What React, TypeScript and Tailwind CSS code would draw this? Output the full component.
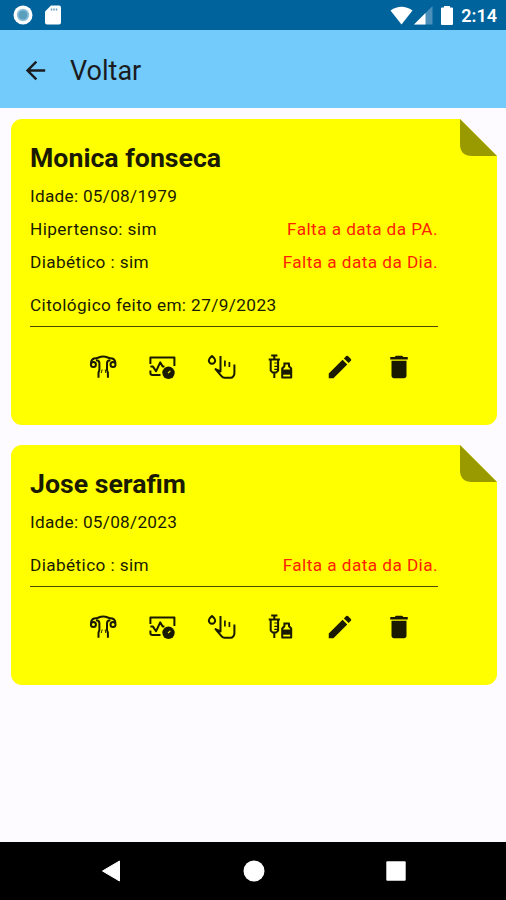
import React from 'react';
import { MdArrowBack, MdDelete, MdEdit } from 'react-icons/md';

interface Patient {
  name: string;
  birth: string;
  rows: { label: string; warning?: string; spaced?: boolean }[];
}

const patients: Patient[] = [
  {
    name: 'Monica fonseca',
    birth: '05/08/1979',
    rows: [
      { label: 'Hipertenso: sim', warning: 'Falta a data da PA.' },
      { label: 'Diabético : sim', warning: 'Falta a data da Dia.' },
      { label: 'Citológico feito em: 27/9/2023', spaced: true },
    ],
  },
  {
    name: 'Jose serafim',
    birth: '05/08/2023',
    rows: [{ label: 'Diabético : sim', warning: 'Falta a data da Dia.', spaced: true }],
  },
];

function ActionIcon({ children }: { children: React.ReactNode }) {
  return (
    <svg
      viewBox="0 0 30 30"
      className="h-[30px] w-[30px]"
      fill="none"
      stroke="currentColor"
      strokeWidth="2"
      strokeLinejoin="round"
    >
      {children}
    </svg>
  );
}

function UterusIcon() {
  return (
    <ActionIcon>
      <circle cx="5.4" cy="12.6" r="2.5" />
      <circle cx="25" cy="12.6" r="2.500" />
      <path d="M2.900 10.800C3.400 7.500 5.200 6.200 8 6.200c2.600 0 3-1.700 7.200-1.700s4.600 1.700 7.200 1.700c2.800 0 4.600 1.300 5.100 4.600" />
      <path d="M8 8.300c2.500 0 3.400.7 3.400 3v6.200c0 1.600-.9 2-.9 3.500v4.700" />
      <path d="M22.400 8.300c-2.500 0-3.400.7-3.400 3v6.200c0 1.600.9 2 .9 3.500v4.700" />
      <path d="M14.200 17.500c0 1.500-1 2-1 3.500M17.200 17.500c0 1.500.6 2 .6 3.500" strokeWidth="1" />
    </ActionIcon>
  );
}

function PressureIcon() {
  return (
    <ActionIcon>
      <path d="M3.400 12V5.600h24V14M3.400 18.500v2.500q0 2 2 2H13.500" />
      <path d="M3.400 14.600h2.600l3 4.700 4.200-9 2.500 4.300h1.800" />
      <circle cx="21.500" cy="20.800" r="6.200" fill="currentColor" stroke="none" />
      <path d="M21 21.200l2.400-2.400" stroke="#ffff00" strokeWidth="1.100" />
    </ActionIcon>
  );
}

function GlucoseIcon() {
  return (
    <ActionIcon>
      <path d="M6 4c1.600 1.700 3.200 2.700 3.200 4.500a3.200 3.200 0 0 1-6.400 0C2.800 6.700 4.400 5.700 6 4z" />
      <path d="M14.500 4v15.500l-5-2.400 6.200 7.300c.8 1 1.500 1.400 2.800 1.400h6.300c1.800 0 3.600-2.600 3.600-4.300V12.500" />
      <path d="M18.900 8.500v6M23.400 10v5" strokeWidth="1.700" />
    </ActionIcon>
  );
}

function SyringeIcon() {
  return (
    <ActionIcon>
      <path d="M6.200 3.500h6.200M9.300 3.500v4M3.700 7.600h11.200M5.700 7.600v11l1.800 1.800h3.800l1.800-1.800V7.600M9.300 20.400V26" />
      <path d="M9.300 11h3.400M9.300 14.300h3.400M9.300 17.300h3.400" strokeWidth="1.200" />
      <path d="M18.400 11.500h6.400M19.400 11.500v2.700l-2.200 2.300v9h9v-9L24 14.200v-2.700" />
      <path d="M17 17.500h9v5.200h-9z" fill="currentColor" stroke="none" />
    </ActionIcon>
  );
}

function PatientCard({ patient }: { patient: Patient }) {
  return (
    <article className="relative w-[485.5px] rounded-[11px] bg-[#ffff00] pr-[58.5px] pb-[42.5px] pl-[19px]">
      {/* Folded corner */}
      <svg viewBox="0 0 37 37" className="absolute top-0 right-0 h-[37px] w-[37px]">
        <path d="M0 -1H38V37H37L0 0z" fill="#fdfbff" />
        <path d="M0 0L37 37H12Q0 37 0 25z" fill="#999900" />
      </svg>

      <h2 className="pt-[23px] text-[26.7px] leading-[32px] font-bold">{patient.name}</h2>
      <p className="mt-[10px] text-[17.2px] leading-[25px] tracking-[0.28px]">Idade: {patient.birth}</p>

      {patient.rows.map((row) => (
        <div
          key={row.label}
          className={`flex justify-between text-[17.2px] leading-[25px] ${
            row.spaced ? 'mt-[18px]' : 'mt-[8px]'
          }`}
        >
          <span className="tracking-[0.4px]">{row.label}</span>
          {row.warning && <span className="tracking-[0.44px] text-[#ff2200]">{row.warning}</span>}
        </div>
      ))}

      <hr className="mt-[8px] border-t border-[#4a4a00]" />

      <div className="mt-[25px] flex gap-[29px] pl-[58px]">
        <button aria-label="Citológico"><UterusIcon /></button>
        <button aria-label="Pressão"><PressureIcon /></button>
        <button aria-label="Glicemia"><GlucoseIcon /></button>
        <button aria-label="Vacina"><SyringeIcon /></button>
        <button aria-label="Editar" className="pl-[0.6px]"><MdEdit className="h-[30px] w-[30px]" /></button>
        <button aria-label="Excluir"><MdDelete className="h-[30px] w-[30px]" /></button>
      </div>
    </article>
  );
}

function StatusBar() {
  return (
    <div className="flex h-[30px] items-center justify-between bg-[#00639c] pr-[9px] pl-[13px] text-white">
      <div className="flex items-center gap-[12px]">
        <svg viewBox="0 0 20 20" className="h-[20px] w-[20px]">
          <circle cx="10" cy="10" r="9.5" fill="#fff" />
          <circle cx="10" cy="10" r="6.2" fill="#8fc0d8" />
          <circle cx="10" cy="10" r="4.5" fill="#5b9fbf" />
        </svg>
        <svg viewBox="0 0 16 20" className="h-[20px] w-[16px]">
          <path d="M6 .5h8a2 2 0 0 1 2 2v15a2 2 0 0 1-2 2H2a2 2 0 0 1-2-2V6.500z" fill="#fff" />
          <path d="M6.500 3.500v2M9 3.500v2M11.500 3.500v2" stroke="#6a9fc2" strokeWidth="1.500" />
        </svg>
      </div>
      <div className="flex items-center">
        <svg viewBox="0 0 23 19" className="h-[19px] w-[23px]">
          <path d="M.5 4.500Q11.500-3 22.500 4.500L11.500 18.500z" fill="#fff" />
        </svg>
        <svg viewBox="0 0 19 19" className="ml-px h-[19px] w-[19px]">
          <path d="M18.500 0v18.500H0z" fill="#4b90ba" />
          <path d="M11.500 7v11.500H0z" fill="#fff" />
        </svg>
        <svg viewBox="0 0 12 19" className="ml-[8px] h-[19px] w-[12px]">
          <path d="M3 0h6v1.500h2a1 1 0 0 1 1 1V18a1 1 0 0 1-1 1H1a1 1 0 0 1-1-1V2.500a1 1 0 0 1 1-1h2z" fill="#fff" />
        </svg>
        <span className="ml-[8px] pt-[2px] text-[18px] leading-[20px] font-semibold">2:14</span>
      </div>
    </div>
  );
}

export default function App() {
  return (
    <div className="flex h-[900px] w-[506px] flex-col overflow-hidden bg-[#fdfbff] font-['Roboto',sans-serif] text-[#1a1c1e]">
      <StatusBar />
      <header className="flex h-[78px] items-center bg-[#72cbfb] pt-[2px] pl-[21px]">
        <MdArrowBack className="h-[29px] w-[29px]" />
        <h1 className="ml-[20px] pt-[2px] text-[27px] leading-[34px]">Voltar</h1>
      </header>

      <main className="flex flex-1 flex-col gap-[20.5px] pt-[11px] pl-[11px] text-[#1a1a00]">
        {patients.map((patient) => (
          <PatientCard key={patient.name} patient={patient} />
        ))}
      </main>

      <nav className="flex h-[58px] items-center justify-between bg-black pr-[100px] pl-[101px]">
        <svg viewBox="0 0 20 22" className="h-[22px] w-[20px]">
          <path d="M18.500 1v20L1.500 11z" fill="#fff" stroke="#fff" strokeLinejoin="round" />
        </svg>
        <svg viewBox="0 0 22 22" className="h-[22px] w-[22px]">
          <circle cx="11" cy="11" r="10.5" fill="#fff" />
        </svg>
        <svg viewBox="0 0 20 20" className="h-[20px] w-[20px]">
          <rect x=".3" y=".3" width="19.4" height="19.4" rx="1" fill="#fff" />
        </svg>
      </nav>
    </div>
  );
}
